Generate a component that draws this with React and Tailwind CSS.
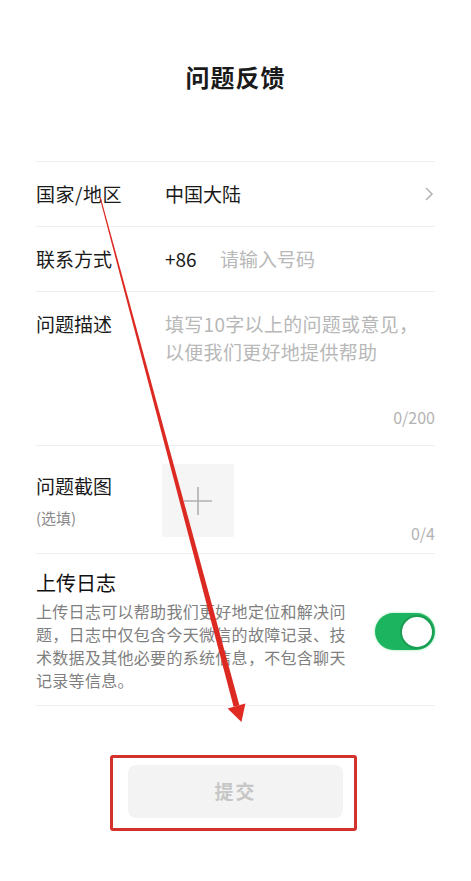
export default function App() {
  const font = { fontFamily: '"Noto Sans CJK SC", "Noto Sans", sans-serif' };

  return (
    <div className="relative w-[471px] h-[881px] bg-white text-[#1a1a1a] overflow-hidden" style={font}>
      {/* Header */}
      <div className="h-[161px] flex justify-center pt-[61px]">
        <h1 className="text-[24px] leading-[32px] font-bold tracking-[1px] m-0">问题反馈</h1>
      </div>

      <div className="px-[36px]">
        {/* Country */}
        <div className="h-[65px] border-t border-[#efefef] flex items-center">
          <div className="w-[129px] text-[19px] tracking-[0.5px]">国家/地区</div>
          <div className="flex-1 text-[19px]">中国大陆</div>
          <svg width="10" height="16" viewBox="0 0 10 16" className="mr-[1px]">
            <path d="M2 2l6 6-6 6" fill="none" stroke="#b5b5b5" strokeWidth="1.6" />
          </svg>
        </div>

        {/* Contact */}
        <div className="h-[65px] border-t border-[#efefef] flex items-center">
          <div className="w-[129px] text-[19px]">联系方式</div>
          <div className="text-[19px] w-[55px]">+86</div>
          <div className="text-[19px] text-[#b8b8b8]">请输入号码</div>
        </div>

        {/* Description */}
        <div className="h-[154px] border-t border-[#efefef] flex pt-[18px]">
          <div className="w-[129px] text-[19px] leading-[28px]">问题描述</div>
          <div className="flex-1 flex flex-col">
            <div className="text-[19px] leading-[28px] text-[#b8b8b8] tracking-[0.3px]">
              填写10字以上的问题或意见，
              <br />
              以便我们更好地提供帮助
            </div>
            <div className="mt-auto mb-[17px] text-right text-[16px] leading-[22px] text-[#b3b3b3]">0/200</div>
          </div>
        </div>

        {/* Screenshot */}
        <div className="h-[108px] border-t border-[#efefef] flex">
          <div className="w-[126px] pt-[27px]">
            <div className="text-[19px] leading-[26px]">问题截图</div>
            <div className="text-[15px] leading-[22px] text-[#8a8a8a] mt-[8px]">(选填)</div>
          </div>
          <div className="mt-[18px] w-[72px] h-[73px] bg-[#f5f5f5] flex items-center justify-center">
            <svg width="30" height="30" viewBox="0 0 30 30">
              <path d="M15 1v28M1 15h28" stroke="#b0b0b0" strokeWidth="1.6" fill="none" />
            </svg>
          </div>
          <div className="flex-1 flex items-end justify-end pb-[9px]">
            <span className="text-[16px] leading-[22px] text-[#b3b3b3]">0/4</span>
          </div>
        </div>

        {/* Upload log */}
        <div className="h-[153px] border-t border-[#efefef] border-b flex">
          <div className="w-[312px] pt-[15px]">
            <div className="text-[20px] leading-[28px] text-[#111]">上传日志</div>
            <div className="mt-[3px] text-[16px] leading-[23px] text-[#7f7f7f] tracking-[0.3px]">
              上传日志可以帮助我们更好地定位和解决问
              <br />
              题，日志中仅包含今天微信的故障记录、技
              <br />
              术数据及其他必要的系统信息，不包含聊天
              <br />
              记录等信息。
            </div>
          </div>
          <div className="flex-1 flex justify-end pt-[59px]">
            <div className="w-[60px] h-[37px] rounded-full bg-[#1db45f] flex items-center justify-end pr-[1px] shadow-[0_0_3px_#9be9b9]">
              <div className="w-[34px] h-[34px] rounded-full bg-white border-2 border-[#1a9c52]" />
            </div>
          </div>
        </div>
      </div>

      {/* Submit */}
      <div className="flex justify-center pt-[59px]">
        <button className="w-[215px] h-[53px] rounded-lg bg-[#f3f3f3] text-[19px] font-semibold text-[#c6c6c6] tracking-[2px]">
          提交
        </button>
      </div>

      {/* Annotation: red box */}
      <div className="absolute left-[110px] top-[755px] w-[247px] h-[76px] border-[3px] border-[#d3322c] rounded-[3px]" />

      {/* Annotation: red arrow */}
      <svg className="absolute left-0 top-0 pointer-events-none" width="471" height="881" viewBox="0 0 471 881">
        <polygon points="99.5,197.1 100.6,196.9 239.4,705.2 233.6,706.8" fill="#dc2a22" />
        <polygon points="227.6,708.4 245.4,703.6 241.4,722" fill="#e02a22" />
      </svg>
    </div>
  );
}
